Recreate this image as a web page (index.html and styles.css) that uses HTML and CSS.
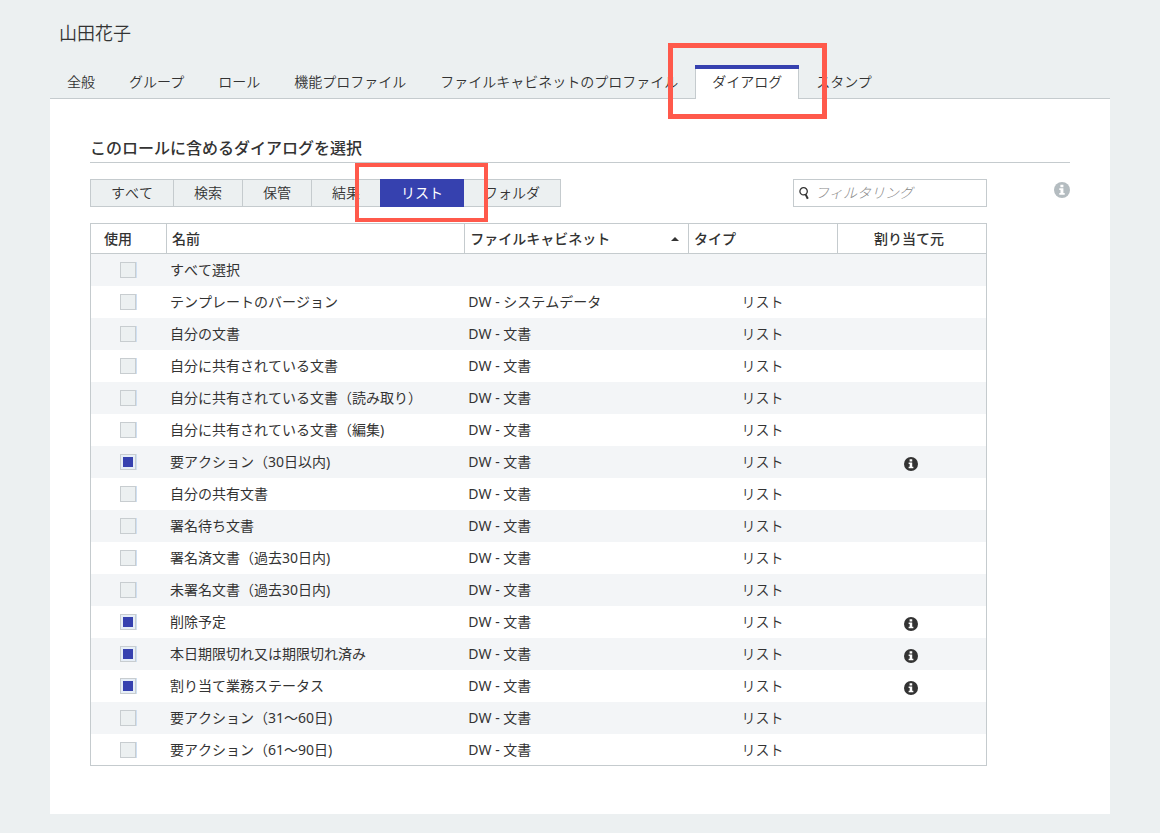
FILE: index.html
```html
<!DOCTYPE html>
<html lang="ja">
<head>
  <meta charset="UTF-8">
  <meta name="viewport" content="width=device-width, initial-scale=1.0">
  <title>山田花子</title>
  <link rel="stylesheet" href="styles.css">
</head>
<body>
  <svg class="sprite" aria-hidden="true">
    <symbol id="info" viewBox="0 0 16 16">
      <circle cx="8" cy="8" r="8" fill="currentColor"/>
      <path fill="#fff" d="M6.4 2.7h3v2.5h-3zM5.3 6.3h4.1v4.8h1.3v1.7H5.3v-1.7h1.2V8H5.3z"/>
    </symbol>
  </svg>

  <header class="page-header">
    <h1 class="user-name">山田花子</h1>
    <nav>
      <ul class="tabs">
        <li class="tab"><a href="#general">全般</a></li>
        <li class="tab"><a href="#groups">グループ</a></li>
        <li class="tab"><a href="#roles">ロール</a></li>
        <li class="tab"><a href="#functions">機能プロファイル</a></li>
        <li class="tab"><a href="#cabinets">ファイルキャビネットのプロファイル</a></li>
        <li class="tab active"><a href="#dialogs">ダイアログ</a><span class="marker marker-tab"></span></li>
        <li class="tab"><a href="#stamps">スタンプ</a></li>
      </ul>
    </nav>
  </header>

  <main class="panel">
    <h2 class="section-title">このロールに含めるダイアログを選択</h2>

    <div class="section-body">
      <div class="dialogs">
        <div class="toolbar">
          <ul class="segments">
            <li class="segment"><button type="button">すべて</button></li>
            <li class="segment"><button type="button">検索</button></li>
            <li class="segment"><button type="button">保管</button></li>
            <li class="segment"><button type="button">結果</button></li>
            <li class="segment active"><button type="button">リスト</button><span class="marker marker-segment"></span></li>
            <li class="segment"><button type="button">フォルダ</button></li>
          </ul>
          <label class="filter">
            <svg class="filter-icon" viewBox="0 0 10 13" aria-hidden="true">
              <ellipse cx="4.6" cy="4.3" rx="3.7" ry="3.6" fill="none" stroke="#333" stroke-width="1.3"/>
              <path d="M6.6 7.4l2.2 4.4" fill="none" stroke="#333" stroke-width="2"/>
            </svg>
            <input type="text" placeholder="フィルタリング" aria-label="フィルタリング">
          </label>
        </div>

        <table class="dialog-table">
          <colgroup>
            <col class="col-use">
            <col class="col-name">
            <col class="col-cabinet">
            <col class="col-type">
            <col class="col-origin">
          </colgroup>
          <thead>
            <tr>
              <th class="use">使用</th>
              <th>名前</th>
              <th>
                <div class="sortable">ファイルキャビネット
                  <svg class="sort-icon" viewBox="0 0 8 4" aria-hidden="true"><path d="M0 4l4-4 4 4z" fill="#333"/></svg>
                </div>
              </th>
              <th>タイプ</th>
              <th class="origin">割り当て元</th>
            </tr>
          </thead>
          <tbody>
            <tr>
              <td class="use"><input type="checkbox" id="d0"></td>
              <td><label for="d0">すべて選択</label></td>
              <td></td>
              <td class="type"></td>
              <td class="origin"></td>
            </tr>
            <tr>
              <td class="use"><input type="checkbox" id="d1"></td>
              <td><label for="d1">テンプレートのバージョン</label></td>
              <td>DW - システムデータ</td>
              <td class="type">リスト</td>
              <td class="origin"></td>
            </tr>
            <tr>
              <td class="use"><input type="checkbox" id="d2"></td>
              <td><label for="d2">自分の文書</label></td>
              <td>DW - 文書</td>
              <td class="type">リスト</td>
              <td class="origin"></td>
            </tr>
            <tr>
              <td class="use"><input type="checkbox" id="d3"></td>
              <td><label for="d3">自分に共有されている文書</label></td>
              <td>DW - 文書</td>
              <td class="type">リスト</td>
              <td class="origin"></td>
            </tr>
            <tr>
              <td class="use"><input type="checkbox" id="d4"></td>
              <td><label for="d4">自分に共有されている文書（読み取り）</label></td>
              <td>DW - 文書</td>
              <td class="type">リスト</td>
              <td class="origin"></td>
            </tr>
            <tr>
              <td class="use"><input type="checkbox" id="d5"></td>
              <td><label for="d5">自分に共有されている文書（編集)</label></td>
              <td>DW - 文書</td>
              <td class="type">リスト</td>
              <td class="origin"></td>
            </tr>
            <tr>
              <td class="use"><input type="checkbox" id="d6" checked></td>
              <td><label for="d6">要アクション（30日以内)</label></td>
              <td>DW - 文書</td>
              <td class="type">リスト</td>
              <td class="origin"><svg class="row-info"><use href="#info"/></svg></td>
            </tr>
            <tr>
              <td class="use"><input type="checkbox" id="d7"></td>
              <td><label for="d7">自分の共有文書</label></td>
              <td>DW - 文書</td>
              <td class="type">リスト</td>
              <td class="origin"></td>
            </tr>
            <tr>
              <td class="use"><input type="checkbox" id="d8"></td>
              <td><label for="d8">署名待ち文書</label></td>
              <td>DW - 文書</td>
              <td class="type">リスト</td>
              <td class="origin"></td>
            </tr>
            <tr>
              <td class="use"><input type="checkbox" id="d9"></td>
              <td><label for="d9">署名済文書（過去30日内)</label></td>
              <td>DW - 文書</td>
              <td class="type">リスト</td>
              <td class="origin"></td>
            </tr>
            <tr>
              <td class="use"><input type="checkbox" id="d10"></td>
              <td><label for="d10">未署名文書（過去30日内)</label></td>
              <td>DW - 文書</td>
              <td class="type">リスト</td>
              <td class="origin"></td>
            </tr>
            <tr>
              <td class="use"><input type="checkbox" id="d11" checked></td>
              <td><label for="d11">削除予定</label></td>
              <td>DW - 文書</td>
              <td class="type">リスト</td>
              <td class="origin"><svg class="row-info"><use href="#info"/></svg></td>
            </tr>
            <tr>
              <td class="use"><input type="checkbox" id="d12" checked></td>
              <td><label for="d12">本日期限切れ又は期限切れ済み</label></td>
              <td>DW - 文書</td>
              <td class="type">リスト</td>
              <td class="origin"><svg class="row-info"><use href="#info"/></svg></td>
            </tr>
            <tr>
              <td class="use"><input type="checkbox" id="d13" checked></td>
              <td><label for="d13">割り当て業務ステータス</label></td>
              <td>DW - 文書</td>
              <td class="type">リスト</td>
              <td class="origin"><svg class="row-info"><use href="#info"/></svg></td>
            </tr>
            <tr>
              <td class="use"><input type="checkbox" id="d14"></td>
              <td><label for="d14">要アクション（31～60日)</label></td>
              <td>DW - 文書</td>
              <td class="type">リスト</td>
              <td class="origin"></td>
            </tr>
            <tr>
              <td class="use"><input type="checkbox" id="d15"></td>
              <td><label for="d15">要アクション（61～90日)</label></td>
              <td>DW - 文書</td>
              <td class="type">リスト</td>
              <td class="origin"></td>
            </tr>
          </tbody>
        </table>
      </div>

      <svg class="help-icon"><use href="#info"/></svg>
    </div>
  </main>
</body>
</html>
```
FILE: styles.css
```css
* {
  box-sizing: border-box;
}

body {
  margin: 0;
  padding: 20px 50px 19px;
  background-color: #ecf0f1;
  color: #333;
  font-family: 'Noto Sans', 'Noto Sans CJK JP', sans-serif;
  font-size: 14px;
  font-kerning: none;
  line-height: 20px;
}

ul {
  margin: 0;
  padding: 0;
  list-style: none;
}

.sprite {
  display: none;
}

.user-name {
  margin: 0 0 19px;
  padding: 0 9px;
  font-size: 18px;
  font-weight: 350;
  line-height: 26px;
}

/* tabs */
.tabs {
  display: flex;
  border-bottom: 1px solid #c5cbce;
  font-kerning: normal;
}

.tab {
  position: relative;
  margin-bottom: -1px;
  padding: 3px 16px 7px;
  border: solid transparent;
  border-width: 4px 1px 0;
  white-space: nowrap;
}

.tab a {
  color: inherit;
  font-weight: 350;
  text-decoration: none;
}

.tab.active {
  z-index: 1;
  padding: 0;
  border: 0;
  border-top: 4px solid #3641af;
  background-color: #fff;
}

.tab.active a {
  display: block;
  padding: 3px 16px 7px;
  border: solid #c5cbce;
  border-width: 0 1px;
}

/* red frames round the things to click */
.marker {
  position: absolute;
  border: 5px solid #ff594b;
  pointer-events: none;
}

.marker-tab {
  top: -26px;
  right: -28px;
  bottom: -20px;
  left: -27px;
}

.marker-segment {
  top: -16px;
  right: -24px;
  bottom: -15px;
  left: -25px;
  border-width: 4px;
}

.panel {
  padding: 39px 40px 48px;
  background-color: #fff;
}

.section-title {
  margin: 0 0 16px;
  padding-bottom: 4px;
  border-bottom: 1px solid #c5cbce;
  font-size: 16px;
  font-weight: 500;
}

.section-body {
  display: grid;
  grid-template-columns: 1fr 16px;
  column-gap: 67px;
}

.help-icon {
  width: 16px;
  height: 16px;
  margin-top: 3px;
  color: #b4bcc0;
}

/* toolbar */
.toolbar {
  display: flex;
  justify-content: space-between;
  margin-bottom: 16px;
}

.segments {
  display: flex;
}

.segment {
  position: relative;
}

.segment + .segment {
  margin-left: -1px;
}

.segment button {
  display: block;
  height: 28px;
  padding: 0 20px;
  border: 1px solid #c5cbce;
  background-color: #ecf0f1;
  color: #333;
  font: inherit;
  font-kerning: none;
  font-weight: 350;
  white-space: nowrap;
}

.segment.active {
  z-index: 1;
}

.segment.active button {
  border-color: #3641af;
  background-color: #3641af;
  color: #fff;
  font-weight: 400;
}

.filter {
  display: flex;
  align-items: center;
  gap: 6px;
  width: 194px;
  height: 28px;
  padding: 0 5px;
  border: 1px solid #c5cbce;
}

.filter-icon {
  flex: none;
  width: 10px;
  height: 13px;
}

.filter input {
  flex: 1;
  min-width: 0;
  padding: 0;
  border: 0;
  outline: 0;
  background: none;
  color: #333;
  font: inherit;
}

.filter input::placeholder {
  color: #888;
  font-style: italic;
  font-weight: 300;
}

/* table */
.dialog-table {
  width: 100%;
  border: 1px solid #c5cbce;
  border-spacing: 0;
  table-layout: fixed;
}

.col-use {
  width: 75px;
}

.col-cabinet {
  width: 25%;
}

.col-type,
.col-origin {
  width: 149px;
}

.dialog-table th {
  height: 30px;
  padding: 0 5px;
  border-bottom: 1px solid #c5cbce;
  border-left: 1px solid #c5cbce;
  font-weight: 500;
  text-align: left;
}

.dialog-table th.use {
  padding-left: 13px;
  border-left: 0;
}

.dialog-table th.origin {
  padding-right: 11px;
  text-align: center;
}

.sortable {
  display: flex;
  align-items: center;
  justify-content: space-between;
  padding-right: 4px;
}

.sort-icon {
  width: 8px;
  height: 4px;
}

.dialog-table td {
  height: 32px;
  padding: 0 4px;
  font-weight: 400;
}

.dialog-table tbody tr:last-child td {
  height: 31px;
}

.dialog-table tbody tr:nth-child(odd) {
  background-color: #f3f5f7;
}

.dialog-table td.use,
.dialog-table td.origin {
  padding: 0 2px 0 0;
}

.dialog-table td.type {
  padding: 0;
  font-weight: 350;
  text-align: center;
}

.dialog-table input {
  display: block;
  width: 16px;
  height: 16px;
  margin: 0 auto;
  border: 1px solid #c8cdd0;
  background-color: #ecf0f1;
  box-shadow: 1px 0 #cfe0f3;
  appearance: none;
}

.dialog-table input:checked {
  padding: 2px;
  background: #3641af content-box;
  box-shadow: inset 0 0 0 2px #e6eef7, 1px 0 #cfe0f3;
}

.row-info {
  display: block;
  width: 14px;
  height: 14px;
  margin: 3px auto 0;
}
```
